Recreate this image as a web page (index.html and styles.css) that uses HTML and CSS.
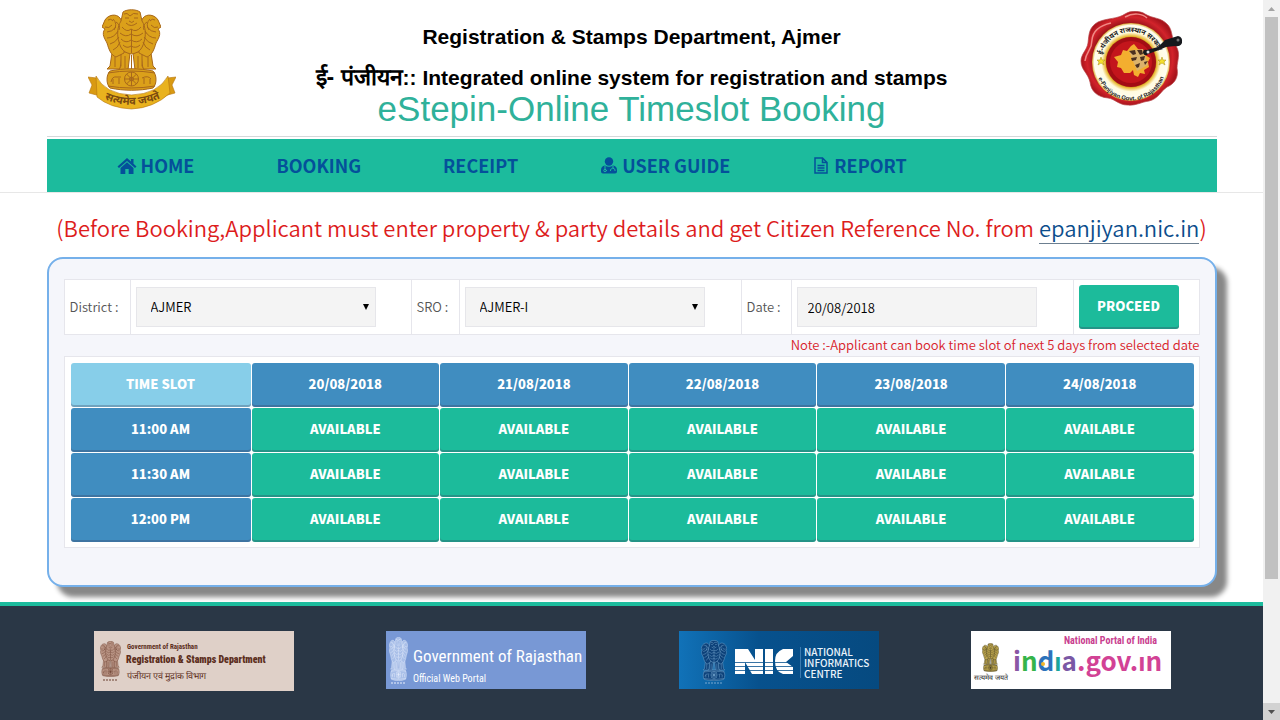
FILE: index.html
```html
<!DOCTYPE html>
<html lang="en">
<head>
<meta charset="utf-8">
<title>eStepin-Online Timeslot Booking</title>
<link rel="stylesheet" href="styles.css">
</head>
<body>
<svg class="defs" aria-hidden="true">
  <symbol id="lions" viewBox="14 0 59 82" preserveAspectRatio="none">
    <g class="e-shape">
      <path d="M24 44 L22 57 L19 60 H32 L34 46Z M63 44 L65 57 L68 60 H55 L53 46Z"/>
      <path d="M33 42 L33 57 L31 61 H40 L42 44Z M54 42 L54 57 L56 61 H47 L45 44Z"/>
      <path d="M32 9 C28 4 20 6 17 11 L14 18 L17 20 C13 25 17 30 19 34 C21 41 23 46 28 48 L36 44 L37 18Z"/>
      <path d="M55 9 C59 4 67 6 70 11 L73 18 L70 20 C74 25 70 30 68 34 C66 41 64 46 59 48 L51 44 L50 18Z"/>
      <path d="M35 3 C39 0 48 0 52 3 L54 12 C58 18 58 27 56 33 C54 41 50 44 43.5 45 C37 44 33 41 31 33 C29 27 29 18 33 12Z"/>
      <path d="M22 62 C36 59 51 59 65 62 C69 66 69 75 65 79 C51 82 36 82 22 79 C18 75 18 66 22 62Z"/>
    </g>
    <g class="e-line">
      <path d="M36 5 q3 -2 6 2 q3 -4 8 -2 M37 9 h4 M46 9 h4 M41 12 q3 3 5 0 M38 14 q5 5 11 0 M34 18 q5 6 9 2 q5 4 10 -2 M32 24 q6 5 11 1 q6 4 12 -1 M33 30 q5 5 10 1 q6 4 11 -1 M35 36 q4 4 8 1 q5 3 9 -1 M43.5 20 v24"/>
      <path d="M20 11 q3 -2 5 1 M17 18 q4 2 7 -2 M25 10 q5 5 1 11 M19 23 q5 0 9 -5 M19 29 q7 0 11 -7 M22 35 q5 -1 9 -7 M25 41 q5 -2 7 -8 M28 13 q5 3 3 8"/>
      <path d="M67 11 q-3 -2 -5 1 M70 18 q-4 2 -7 -2 M62 10 q-5 5 -1 11 M68 23 q-5 0 -9 -5 M68 29 q-7 0 -11 -7 M65 35 q-5 -1 -9 -7 M62 41 q-5 -2 -7 -8 M59 13 q-5 3 -3 8"/>
      <path d="M27 48 v10 M37 47 v12 M50 47 v12 M60 48 v10 M43.5 46 v14 M20 64 q23 -4 47 0 M20 77 q23 4 47 0"/>
      <circle cx="43.5" cy="70" r="7"/><circle cx="43.5" cy="70" r="2"/>
      <path d="M36.500 70 h14 M43.5 63 v14 M38.500 65 l10 10 M48.500 65 l-10 10"/>
      <path d="M23 73 q1 -6 6 -5 h4 M25 70 v5 M31 69 v6 M54 69 q6 -3 9 1 M56 69 v6 M62 70 v5"/>
    </g>
  </symbol>
</svg>

<div class="page">
  <header class="masthead container">
    <svg class="emblem" viewBox="0 0 88 101" role="img" aria-label="State Emblem of India">
      <use href="#lions" x="14" y="0" width="59" height="82"/>
      <path d="M9 69 L0 68 L4 76 L1 84 L12 87Z M79 69 L88 68 L84 76 L87 84 L76 87Z" fill="#d99a12" stroke="#b5760f" stroke-width=".6"/>
      <path d="M8 67 Q17 85 43.500 86 Q70 85 80 67 L82 84 Q66 99 43.500 100 Q22 99 9 88Z" fill="#e9b21e" stroke="#b5760f" stroke-width=".6"/>
      <path id="mottoArc" d="M10 87 Q43 105 79 86" fill="none"/>
      <text class="motto"><textPath href="#mottoArc" startOffset="50%" text-anchor="middle">सत्यमेव जयते</textPath></text>
    </svg>
    <div class="titles">
      <p class="dept">Registration &amp; Stamps Department, Ajmer</p>
      <p class="dept system"><span class="hindi">ई- पंजीयन</span>:: Integrated online system for registration and stamps</p>
      <h1>eStepin-Online Timeslot Booking</h1>
    </div>
    <svg class="seal" viewBox="0 0 103 95" role="img" aria-label="e-Panjiyan seal, Govt. of Rajasthan">
      <defs>
        <radialGradient id="wax"><stop offset=".7" stop-color="#8e0f16"/><stop offset=".88" stop-color="#d2232b"/><stop offset="1" stop-color="#a9141c"/></radialGradient>
        <radialGradient id="ring"><stop offset=".6" stop-color="#6b2a12"/><stop offset=".66" stop-color="#e8b730"/><stop offset=".76" stop-color="#fffbe0"/><stop offset=".94" stop-color="#fffdf0"/><stop offset="1" stop-color="#d9a92c"/></radialGradient>
      </defs>
      <path d="M45 3 C51 -1 61 0 65 3 C73 8 81 6 88 14 C93 20 91 27 96 35 C101 43 97 50 97 57 C99 67 94 73 87 76 C81 80 78 88 69 90 C61 91 56 95 47 94 C39 94 35 88 28 87 C17 86 11 80 10 71 C8 62 1 59 1 50 C1 43 7 39 8 32 C9 23 9 16 18 11 C27 7 38 8 45 3Z" fill="url(#wax)" stroke="#b8474a" stroke-width=".7"/>
      <path d="M5 50 C6 40 12 40 12 29 C13 18 22 14 31 12 M45 6 C54 1 63 3 67 7" fill="none" stroke="#f08a86" stroke-width="1.5"/>
      <circle cx="51" cy="51" r="39" fill="url(#ring)"/>
      <circle cx="51" cy="51" r="25" fill="#a30c14"/>
      <circle cx="51" cy="51" r="21" fill="#c3151c"/>
      <path d="M34 46 L41 44 L43 39 L47 40 L51 35 L54 33 L58 38 L63 40 L65 44 L70 47 L68 51 L69 56 L64 59 L65 63 L60 62 L58 66 L54 64 L53 59 L50 62 L44 62 L41 57 L37 56 L38 51Z" fill="#f3ae2f"/>
      <path d="M49 40 l14 -2 l5 16 l-11 6z" fill="#dcb36b"/>
      <path d="M49 40 l6 -1 l1 4 l-3 1z M57 39 l5 0 l1 4 l-3 1z M51 47 l6 -1 l-1 3 l-4 1z M60 46 l5 -1 l-1 4 l-3 1z M55 54 l5 -2 l-1 4 l-2 1z M64 51 l4 -1 l-3 4z" fill="#4b3020"/>
      <path d="M67 39 L78 36 L85 29 L98 25 Q103 26 102 32 Q100 36 95 35 L86 36 L79 39 L68 43 Q65 46 63 42 Q63 38 67 39Z" fill="#17191d"/>
      <circle cx="98" cy="29" r="1.500" fill="#777"/><circle cx="68" cy="41" r="1.500" fill="#ddd"/>
      <path id="sealTop" d="M22 47 A29 29 0 0 1 79 43" fill="none"/>
      <path id="sealBottom" d="M16 55 A35 35 0 0 0 86 54" fill="none"/>
      <text class="seal-hi"><textPath href="#sealTop" startOffset="50%" text-anchor="middle">ई-पंजीयन राजस्थान सरकार</textPath></text>
      <text class="seal-en"><textPath href="#sealBottom" startOffset="50%" text-anchor="middle">e-Panjiyan Govt. of Rajasthan</textPath></text>
      <path id="star" d="M21 46 l1 3 h3 l-2 2 l1 3 l-3 -2 l-3 2 l1 -3 l-2 -2 h3z" fill="#f3df2e" stroke="#a98b12" stroke-width=".5"/>
      <use href="#star" x="61"/>
    </svg>
  </header>

  <div class="navband">
    <nav class="container nav">
      <a href="#"><svg class="ico-home" viewBox="0 0 20 18"><path d="M10 1 L0.500 9.500 L2 11 L10 4 L18 11 L19.500 9.500 L16.500 6.800 V2 H14 V4.600Z"/><path d="M10 5.300 L3.500 11 V17 H8.300 V12 H11.700 V17 H16.500 V11Z"/></svg>HOME</a>
      <a href="#">BOOKING</a>
      <a href="#">RECEIPT</a>
      <a href="#"><svg class="ico-user" viewBox="0 0 16 17"><circle cx="8" cy="4.500" r="4.200"/><path d="M4 8.500 Q8 11 12 8.500 Q16 9 16 13 V14.500 Q16 16.500 14 16.500 H2 Q0 16.500 0 14.500 V13 Q0 9 4 8.500Z"/><path class="cut" d="M4 9 V12 M12 9 V11 M9.500 14 V12.500 Q12 9.500 14 12.500 V14 M4 12 L6 14"/><circle class="cut" cx="4" cy="13.500" r="1.200"/></svg>USER GUIDE</a>
      <a href="#"><svg class="ico-doc" viewBox="0 0 14 17"><path d="M1 1 H8.500 L13 5.500 V16 H1Z M8.500 1 V5.500 H13 M3.500 8.500 H10.500 M3.500 11 H10.500 M3.500 13.500 H10.500"/></svg>REPORT</a>
    </nav>
  </div>

  <main class="container">
    <p class="notice">(Before Booking,Applicant must enter property &amp; party details and get Citizen Reference No. from <a href="#">epanjiyan.nic.in</a>)</p>
    <section class="panel">
      <form class="filters">
        <label class="lab" for="district">District :</label>
        <div class="field"><span class="pick"><select id="district"><option>AJMER</option></select><svg viewBox="0 0 6 6"><path d="M0 0H6L3 6Z"/></svg></span></div>
        <label class="lab" for="sro">SRO :</label>
        <div class="field"><span class="pick"><select id="sro"><option>AJMER-I</option></select><svg viewBox="0 0 6 6"><path d="M0 0H6L3 6Z"/></svg></span></div>
        <label class="lab" for="date">Date :</label>
        <div class="field"><input id="date" type="text" value="20/08/2018"></div>
        <div class="field"><button class="btn proceed" type="button">PROCEED</button></div>
      </form>
      <p class="note">Note :-Applicant can book time slot of next 5 days from selected date</p>
      <div class="slots-box">
        <table class="slots">
          <thead>
            <tr><th class="btn corner">TIME SLOT</th><th class="btn head">20/08/2018</th><th class="btn head">21/08/2018</th><th class="btn head">22/08/2018</th><th class="btn head">23/08/2018</th><th class="btn head">24/08/2018</th></tr>
          </thead>
          <tbody>
            <tr><th class="btn head">11:00 AM</th><td><button class="btn">AVAILABLE</button></td><td><button class="btn">AVAILABLE</button></td><td><button class="btn">AVAILABLE</button></td><td><button class="btn">AVAILABLE</button></td><td><button class="btn">AVAILABLE</button></td></tr>
            <tr><th class="btn head">11:30 AM</th><td><button class="btn">AVAILABLE</button></td><td><button class="btn">AVAILABLE</button></td><td><button class="btn">AVAILABLE</button></td><td><button class="btn">AVAILABLE</button></td><td><button class="btn">AVAILABLE</button></td></tr>
            <tr><th class="btn head">12:00 PM</th><td><button class="btn">AVAILABLE</button></td><td><button class="btn">AVAILABLE</button></td><td><button class="btn">AVAILABLE</button></td><td><button class="btn">AVAILABLE</button></td><td><button class="btn">AVAILABLE</button></td></tr>
          </tbody>
        </table>
      </div>
    </section>
  </main>

  <footer class="footer">
    <div class="container logos">
      <a href="#" class="logo brown"><svg viewBox="0 0 200 60">
        <rect width="200" height="60" fill="#dfd0c8"/>
        <use href="#lions" x="6" y="10" width="21" height="36"/><path d="M9 49 h15" stroke="#6b4030" stroke-dasharray="2 1"/>
        <text x="33" y="18" class="t-gov">Government of Rajasthan</text>
        <text x="32" y="32" class="t-reg">Registration &amp; Stamps Department</text>
        <text x="33" y="48" class="t-hin">पंजीयन एवं मुद्रांक विभाग</text></svg></a>
      <a href="#" class="logo blue"><svg viewBox="0 0 200 58">
        <rect width="200" height="58" fill="#7898d5"/>
        <use href="#lions" x="3" y="6" width="19" height="44"/><path d="M5 52 h15" stroke="#e8effc" stroke-dasharray="2 1"/>
        <text x="27" y="31" class="t-raj">Government of Rajasthan</text>
        <text x="27" y="51" class="t-web">Official Web Portal</text></svg></a>
      <a href="#" class="logo nic"><svg viewBox="0 0 200 58">
        <defs><linearGradient id="nicbg"><stop offset="0" stop-color="#1172b8"/><stop offset=".4" stop-color="#07518d"/><stop offset="1" stop-color="#064a80"/></linearGradient></defs>
        <rect width="200" height="58" fill="url(#nicbg)"/>
        <use href="#lions" x="22" y="9" width="26" height="41"/><path d="M26 52 h18" stroke="#79a9d0" stroke-dasharray="2 1"/>
        <g fill="#fff"><path d="M56 18 H69 L76 29 V18 H84 V43 H73 L66 31 V43 H56Z"/><path d="M86 18 H94 V43 H86Z"/><path d="M114 18 H104 Q96 21 96 30 Q96 41 104 43 H114 V36 L107 31 L114 25Z"/></g>
        <path d="M55 31.500 H115 M55 35.500 H115 M55 39.500 H115" stroke="#07518d" stroke-width=".8"/>
        <path d="M121.500 16 V47" stroke="#3b7bb0"/>
        <text x="125" y="25" class="t-nic">NATIONAL</text><text x="125" y="36" class="t-nic">INFORMATICS</text><text x="125" y="47" class="t-nic">CENTRE</text></svg></a>
      <a href="#" class="logo india"><svg viewBox="0 0 200 58">
        <rect width="200" height="58" fill="#fff"/>
        <use href="#lions" x="11" y="12" width="17" height="29"/>
        <text x="3" y="49" class="t-sat">सत्यमेव जयते</text>
        <text x="93" y="13" class="t-npi">National Portal of India</text>
        <text x="42" y="40" class="t-ind"><tspan fill="#8a57a5">i</tspan><tspan fill="#35b44a">n</tspan><tspan fill="#2c72bb">d</tspan><tspan fill="#18a69b">ı</tspan><tspan fill="#7a58a5">a</tspan><tspan fill="#d24295">.gov.ın</tspan></text>
        <circle cx="72" cy="33" r="2" fill="#f3b52b"/></svg></a>
    </div>
  </footer>
</div>
<div class="scrollbar" aria-hidden="true">
  <span class="arrow"><svg viewBox="0 0 7 4"><path d="M0 4L3.500 0L7 4Z" fill="#a3a3a3"/></svg></span>
  <span class="thumb"></span>
  <span class="arrow down"><svg viewBox="0 0 7 4"><path d="M0 0L3.500 4L7 0Z" fill="#505050"/></svg></span>
</div>
</body>
</html>
```
FILE: styles.css
```css
* { box-sizing: border-box; }
body {
  margin: 0;
  display: flex;
  min-height: 100vh;
  background: #fff;
  color: #555;
  font: 350 13px/20px "Noto Sans CJK SC", "Open Sans", sans-serif;
}
p, h1 { margin: 0; }
.defs { position: absolute; width: 0; height: 0; }
.page { flex: 1; min-width: 0; display: flex; flex-direction: column; }
.container { width: 100%; max-width: 1170px; margin: 0 auto; }

/* emblem colouring, changed per place of use */
.e-shape { fill: var(--fill, #dba01a); stroke: var(--line, #a8681a); stroke-width: 1; }
.e-line { fill: none; stroke: var(--line, #a8681a); stroke-width: 1; }

.masthead {
  display: grid;
  grid-template-columns: 170px 1fr 170px;
  justify-items: center;
  padding-top: 9px;
  height: 137px;
  border-bottom: 1px solid #d5d8da;
}
.emblem { width: 88px; height: 101px; }
.motto { font: bold 11px "Noto Sans Devanagari", sans-serif; fill: #7a4a10; }
.seal { width: 103px; height: 95px; margin-top: 2px; }
.seal-hi { font: bold 7px "Noto Sans Devanagari", sans-serif; fill: #222; }
.seal-en { font: bold 6px "Liberation Sans", sans-serif; fill: #222; }
.titles { text-align: center; font-family: "Liberation Sans", Arial, sans-serif; padding-top: 13px; }
.dept { color: #000; font-size: 21px; font-weight: bold; line-height: 30px; }
.system { margin-top: 11px; }
.hindi { font-size: 23px; line-height: 1; }
h1 { color: #2fb19a; font-size: 35px; line-height: 32px; font-weight: normal; }

.navband { border-bottom: 1px solid #e7e7e7; padding-top: 2px; }
.nav {
  display: flex;
  gap: 82px;
  padding: 0 70px;
  background: #1cbb9d;
}
.nav a {
  display: flex;
  align-items: center;
  gap: 4px;
  color: #04509a;
  font-size: 18px;
  line-height: 53px;
  font-weight: bold;
  text-decoration: none;
}
.nav svg { fill: #04509a; }
.ico-home { width: 20px; height: 18px; }
.ico-user { width: 16px; height: 17px; margin: 0 1px; }
.ico-doc { width: 14px; height: 17px; margin: 0 2px; }
.nav .ico-doc { fill: none; stroke: #04509a; stroke-width: 1.5; }
.cut { fill: none; stroke: #1cbb9d; stroke-width: 1; }

.notice { color: #dd1c1c; font-size: 22px; line-height: 30px; padding: 19px 0 15px; text-align: center; }
.notice a { color: #0b4d8c; text-decoration: none; border-bottom: 1px solid #6c7f90; }

.panel {
  padding: 20px 15px 37px;
  border: 2px solid #75b0ea;
  border-radius: 16px;
  background: #f5f6fb;
  box-shadow: 10px 10px 5px #888;
}
.filters {
  display: grid;
  grid-template-columns: 65px 281fr 48px 282fr 50px 282fr 126px;
  border: 1px solid #e6e6ec;
  background: #fff;
}
.filters > * { display: flex; align-items: center; min-height: 54px; padding: 5px; }
.filters > * + * { border-left: 1px solid #e6e6ec; }
.lab { color: #555; }
.pick { position: relative; width: 240px; }
.pick svg { position: absolute; right: 7px; top: 17px; width: 6px; height: 6px; }
select, input {
  width: 240px;
  height: 40px;
  padding: 0 10px;
  border: 1px solid #e6e6ea;
  border-radius: 0;
  background: #f4f4f4;
  color: #000;
  font: inherit;
}
select { appearance: none; padding: 0 14px; display: block; }
.btn {
  display: block;
  width: 100%;
  height: 44px;
  padding: 0 0 2px;
  border: 0;
  border-radius: 3px;
  background: #1cbb9b;
  box-shadow: inset 0 -2px 0 rgba(60, 60, 90, .3);
  color: #fff;
  font: 900 13px/20px "Noto Sans CJK SC", sans-serif;
}
.proceed { width: 100px; }
.note { color: #d8222a; text-align: right; line-height: 20px; padding-bottom: 1px; }
.slots-box { padding: 5px 4px 5px 5px; border: 1px solid #e6e6ec; background: #fff; }
.slots { width: 100%; table-layout: fixed; border-collapse: separate; border-spacing: 1px; margin: 0 0 -1px; background: #fff; }
.slots td { padding: 0; }
.slots th.btn { display: table-cell; width: auto; vertical-align: middle; text-align: center; }
.slots th.head { background: #408dc0; }
.slots th.corner { width: 180px; background: #87cee9; }

.footer { flex: 1; margin-top: 15px; padding: 25px 0 29px; border-top: 4px solid #1cbb9d; background: #2a3746; }
.logos { max-width: 1172px; padding-left: 2px; display: grid; grid-template-columns: repeat(4, 1fr); justify-items: center; align-items: start; }
.logo, .logo svg { display: block; width: 200px; }
.brown { --fill: #b99484; --line: #6b4030; }
.blue { --fill: #a9bfe8; --line: #e8effc; }
.nic { --fill: #0d4179; --line: #79a9d0; }
.india { --fill: #b9a24c; --line: #2c2a18; }
.logo text { font-family: "Liberation Sans Narrow", "Roboto Condensed", "Open Sans", sans-serif; font-weight: 400; }
.logo .t-gov { font-size: 7px; font-weight: bold; fill: #5c2e20; }
.logo .t-reg { font-size: 10px; font-weight: 900; fill: #5c2e20; }
.logo .t-hin { font-size: 9px; fill: #5c2e20; }
.logo .t-raj { font-size: 17px; fill: #fff; }
.logo .t-web { font-size: 10px; fill: #fff; }
.logo .t-nic { font: 500 10px "Noto Sans CJK SC", sans-serif; fill: #eaf3fb; }
.logo .t-sat { font-size: 7px; fill: #222; }
.logo .t-npi { font-size: 10px; font-weight: bold; fill: #c9408f; }
.logo .t-ind { font: bold 26px "Noto Sans CJK SC", sans-serif; }

.scrollbar { position: sticky; top: 0; width: 17px; height: 100vh; display: flex; flex-direction: column; background: #f1f1f1; }
.arrow { height: 17px; display: grid; place-items: center; }
.arrow svg { width: 7px; height: 4px; }
.down { margin-top: auto; background: #d2d2d2; }
.thumb { height: 78%; margin: 0 2px; background: #c1c1c1; }
```
